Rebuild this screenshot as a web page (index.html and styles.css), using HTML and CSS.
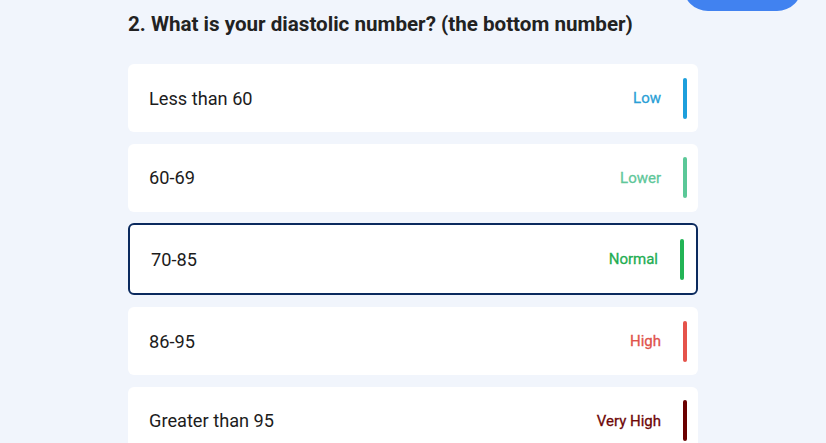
FILE: index.html
```html
<!DOCTYPE html>
<html lang="en">
<head>
<meta charset="UTF-8">
<meta name="viewport" content="width=device-width, initial-scale=1.0">
<title>Blood Pressure Quiz</title>
<link rel="stylesheet" href="styles.css">
</head>
<body>

<div class="page">
  <div class="top-bar">
    <button class="next-btn" type="button" aria-label="Next"></button>
  </div>

  <div class="question">
    <h2 class="question-title">2. What is your diastolic number? (the bottom number)</h2>

    <ul class="option-list">
      <li class="option low">
        <span class="option-text">Less than 60</span>
        <span class="option-tag">Low</span>
        <span class="option-bar"></span>
      </li>
      <li class="option lower">
        <span class="option-text">60-69</span>
        <span class="option-tag">Lower</span>
        <span class="option-bar"></span>
      </li>
      <li class="option normal selected">
        <span class="option-text">70-85</span>
        <span class="option-tag">Normal</span>
        <span class="option-bar"></span>
      </li>
      <li class="option high">
        <span class="option-text">86-95</span>
        <span class="option-tag">High</span>
        <span class="option-bar"></span>
      </li>
      <li class="option very-high">
        <span class="option-text">Greater than 95</span>
        <span class="option-tag">Very High</span>
        <span class="option-bar"></span>
      </li>
    </ul>
  </div>
</div>

</body>
</html>
```

FILE: styles.css
```css
body {
  font-family: Roboto, "Noto Sans", Arial, sans-serif;
  margin: 0;
  padding: 0;
  background-color: #f1f5fc;
  color: #1f1f1f;
  overflow: hidden;
}
.page {
  width: 674px;
  margin-left: 128px;
}
.top-bar {
  display: flex;
  justify-content: flex-end;
  height: 11px;
}
.next-btn {
  width: 119px;
  height: 50px;
  margin-top: -39px;
  border: none;
  border-radius: 25px;
  background-color: #4182f0;
}
.question {
  width: 570px;
}
.question-title {
  margin: 1px 0 28px;
  font-size: 20.6px;
  line-height: 24px;
  font-weight: 700;
  color: #222;
}
.option-list {
  list-style-type: none;
  margin: 0;
  padding: 0;
  display: flex;
  flex-direction: column;
  gap: 11.7px;
}
.option {
  display: flex;
  align-items: center;
  height: 68px;
  padding: 0 11px 0 21px;
  background-color: #fff;
  border-radius: 6px;
  box-sizing: border-box;
}
.option.selected {
  height: 72px;
  border: 2px solid #0b2a5e;
  padding: 0 12px 0 21px;
}
.option-text {
  flex: 1;
  font-size: 18.2px;
  color: #1c1c1c;
}
.option-tag {
  font-size: 15px;
  font-weight: 400;
  -webkit-text-stroke: 0.3px currentColor;
  margin-right: 22px;
}
.option-bar {
  width: 4px;
  height: 41px;
  border-radius: 2px;
}
.low .option-tag { color: #2a9fd6; }
.low .option-bar { background-color: #1d9fdc; }
.lower .option-tag { color: #5fc79a; }
.lower .option-bar { background-color: #5bc898; }
.normal .option-tag { color: #22ad52; }
.normal .option-bar { background-color: #22b455; }
.high .option-tag { color: #e0534c; }
.high .option-bar { background-color: #e5534b; }
.very-high .option-tag { color: #6e0808; }
.very-high .option-bar { background-color: #6b0000; }
```
